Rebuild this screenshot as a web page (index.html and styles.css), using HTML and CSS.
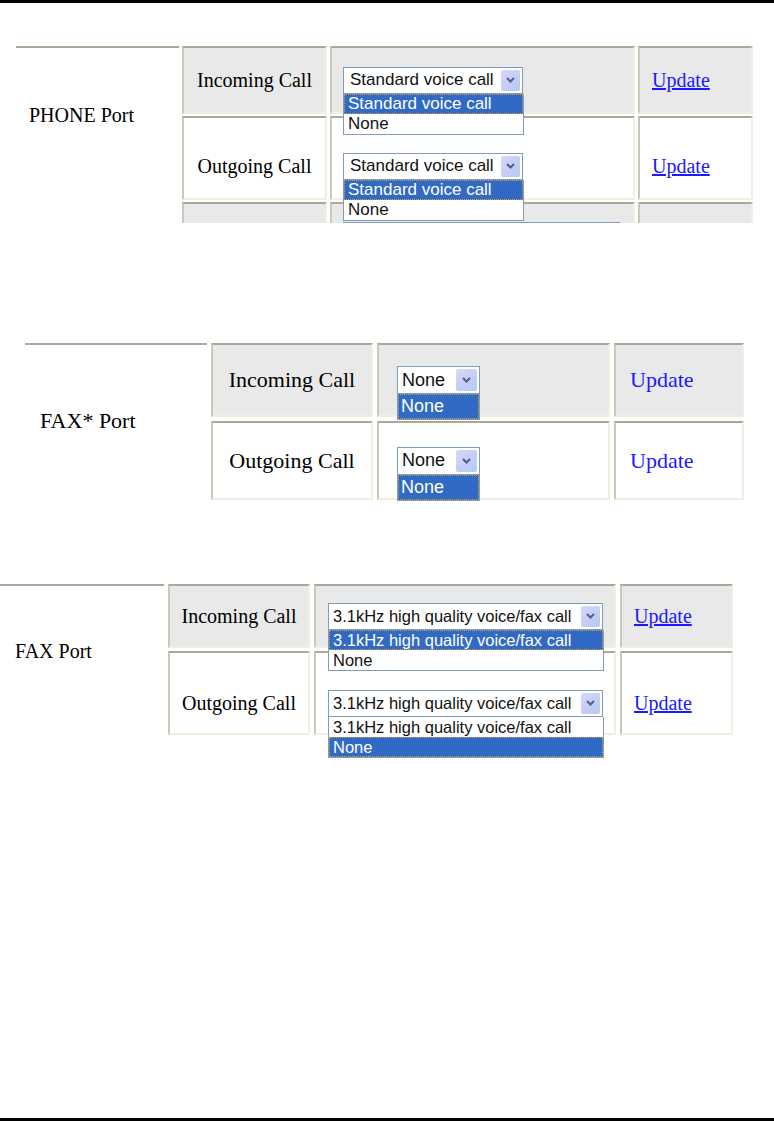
FILE: index.html
```html
<!DOCTYPE html>
<html>
<head>
<meta charset="utf-8">
<link rel="stylesheet" href="styles.css">
</head>
<body>
<div class="page">
  <div class="rule"></div>

  <!-- Block 1: PHONE Port -->
  <div class="shot shot-phone">
    <div class="cell port span2"><span>PHONE Port</span></div>
    <div class="cell gray label">Incoming Call</div>
    <div class="cell gray sel">
      <div class="select">
        <div class="box"><span class="val">Standard voice call</span><span class="btn"><svg width="11" height="8" viewBox="0 0 11 8"><path d="M2 2 L5.5 5.5 L9 2" fill="none" stroke="#4d6185" stroke-width="2"/></svg></span></div>
        <div class="list">
          <div class="opt on">Standard voice call</div>
          <div class="opt">None</div>
        </div>
      </div>
    </div>
    <div class="cell gray link"><a href="#">Update</a></div>

    <div class="cell label low">Outgoing Call</div>
    <div class="cell sel low">
      <div class="select">
        <div class="box"><span class="val">Standard voice call</span><span class="btn"><svg width="11" height="8" viewBox="0 0 11 8"><path d="M2 2 L5.5 5.5 L9 2" fill="none" stroke="#4d6185" stroke-width="2"/></svg></span></div>
        <div class="list">
          <div class="opt on">Standard voice call</div>
          <div class="opt">None</div>
        </div>
      </div>
    </div>
    <div class="cell link low"><a href="#">Update</a></div>

    <div class="cell gray stub"></div>
    <div class="cell gray stub"><div class="edge"></div></div>
    <div class="cell gray stub"></div>
  </div>

  <!-- Block 2: FAX* Port -->
  <div class="shot shot-faxstar">
    <div class="cell port span2"><span>FAX* Port</span></div>
    <div class="cell gray label">Incoming Call</div>
    <div class="cell gray sel">
      <div class="select">
        <div class="box"><span class="val">None</span><span class="btn"><svg width="11" height="8" viewBox="0 0 11 8"><path d="M2 2 L5.5 5.5 L9 2" fill="none" stroke="#4d6185" stroke-width="2"/></svg></span></div>
        <div class="list">
          <div class="opt on">None</div>
        </div>
      </div>
    </div>
    <div class="cell gray link"><a href="#">Update</a></div>

    <div class="cell label">Outgoing Call</div>
    <div class="cell sel">
      <div class="select">
        <div class="box"><span class="val">None</span><span class="btn"><svg width="11" height="8" viewBox="0 0 11 8"><path d="M2 2 L5.5 5.5 L9 2" fill="none" stroke="#4d6185" stroke-width="2"/></svg></span></div>
        <div class="list">
          <div class="opt on">None</div>
        </div>
      </div>
    </div>
    <div class="cell link"><a href="#">Update</a></div>
  </div>

  <!-- Block 3: FAX Port -->
  <div class="shot shot-fax">
    <div class="cell port span2"><span>FAX Port</span></div>
    <div class="cell gray label">Incoming Call</div>
    <div class="cell gray sel">
      <div class="select">
        <div class="box"><span class="val">3.1kHz high quality voice/fax call</span><span class="btn"><svg width="11" height="8" viewBox="0 0 11 8"><path d="M2 2 L5.5 5.5 L9 2" fill="none" stroke="#4d6185" stroke-width="2"/></svg></span></div>
        <div class="list">
          <div class="opt on">3.1kHz high quality voice/fax call</div>
          <div class="opt">None</div>
        </div>
      </div>
    </div>
    <div class="cell gray link"><a href="#">Update</a></div>

    <div class="cell label low">Outgoing Call</div>
    <div class="cell sel low">
      <div class="select">
        <div class="box"><span class="val">3.1kHz high quality voice/fax call</span><span class="btn"><svg width="11" height="8" viewBox="0 0 11 8"><path d="M2 2 L5.5 5.5 L9 2" fill="none" stroke="#4d6185" stroke-width="2"/></svg></span></div>
        <div class="list">
          <div class="opt">3.1kHz high quality voice/fax call</div>
          <div class="opt on">None</div>
        </div>
      </div>
    </div>
    <div class="cell link low"><a href="#">Update</a></div>
  </div>

  <div class="rule rule-bottom"></div>
</div>
</body>
</html>
```

FILE: styles.css
```css
html, body {
  margin: 0;
  padding: 0;
  background: #fff;
}

.page {
  width: 774px;
  height: 1121px;
  display: flex;
  flex-direction: column;
  font-family: "Liberation Serif", "Times New Roman", serif;
  color: #000;
}

.rule {
  height: 3px;
  background: #000;
  flex: none;
}

.rule-bottom {
  margin-top: auto;
}

.shot {
  display: grid;
  flex: none;
}

.cell {
  box-sizing: border-box;
  border-top: 2px solid #aca899;
  border-left: 2px solid #cbc8b8;
  border-right: 2px solid #f1efe2;
  border-bottom: 2px solid #f1efe2;
  background: #fff;
  display: flex;
  align-items: center;
  min-width: 0;
}

.cell.gray {
  background: #e9e9e9;
}

.cell.port {
  border-left: 0;
  border-right: 0;
  border-bottom: 0;
}

.span2 {
  grid-row: span 2;
}

.label {
  justify-content: center;
  white-space: nowrap;
}

.link a {
  color: #1a1aff;
  text-decoration: underline;
}

/* ---------- select widget ---------- */
.select {
  position: relative;
  font-family: "Liberation Sans", Arial, sans-serif;
}

.box {
  box-sizing: border-box;
  border: 1px solid #7f9db9;
  background: #fff;
  display: flex;
  align-items: center;
  padding: 0 2px 0 6px;
}

.val {
  flex: 1;
  white-space: nowrap;
  overflow: hidden;
  color: #111;
}

.btn {
  flex: none;
  width: 19px;
  align-self: stretch;
  margin: 2px 0;
  border-radius: 2px;
  background: linear-gradient(135deg, #dcd8fb 0%, #c6cdf8 50%, #b3cdf3 100%);
  display: flex;
  align-items: center;
  justify-content: center;
}

.list {
  position: absolute;
  left: 0;
  top: 100%;
  z-index: 2;
  box-sizing: border-box;
  border: 1px solid #7f9db9;
  border-top: 0;
  background: #fff;
}

.opt {
  padding-left: 4px;
  white-space: nowrap;
  color: #111;
}

.opt.on {
  background: #316ac5;
  color: #fff;
  outline: 1px dotted #d0a040;
  outline-offset: -1px;
}

/* ---------- block 1: PHONE Port ---------- */
.shot-phone {
  margin: 43px 0 0 16px;
  grid-template-columns: 163px 145px 305px 115px;
  grid-template-rows: 68px 84px 21px;
  column-gap: 3px;
  row-gap: 2px;
  font-size: 20px;
}

.shot-phone .port {
  align-items: center;
  padding: 0 0 18px 13px;
}

.shot-phone .sel {
  padding-left: 11px;
}

.shot-phone .link {
  padding-left: 12px;
}

.shot-phone .low {
  padding-top: 16px;
}

.shot-phone .stub {
  align-items: flex-start;
  border-bottom: 0;
}

.shot-phone .stub:nth-last-child(3) {
  grid-column: 2;
}

.shot-phone .edge {
  margin: 18px 0 0 11px;
  width: 277px;
  height: 1px;
  background: #7f9db9;
}

.shot-phone .select {
  width: 180px;
  font-size: 17px;
}

.shot-phone .box {
  height: 27px;
}

.shot-phone .list {
  width: 181px;
}

.shot-phone .opt {
  height: 20px;
  line-height: 20px;
}

/* ---------- block 2: FAX* Port ---------- */
.shot-faxstar {
  margin: 120px 0 0 25px;
  grid-template-columns: 182px 162px 233px 130px;
  grid-template-rows: 74px 79px;
  column-gap: 4px;
  row-gap: 4px;
  font-size: 22px;
}

.shot-faxstar .port {
  padding: 0 0 4px 15px;
}

.shot-faxstar .sel {
  padding-left: 18px;
}

.shot-faxstar .link {
  padding-left: 14px;
}

.shot-faxstar .link a {
  text-decoration: none;
}

.shot-faxstar .select {
  width: 83px;
  font-size: 18px;
}

.shot-faxstar .box {
  height: 28px;
  padding-left: 4px;
}

.shot-faxstar .btn {
  width: 21px;
}

.shot-faxstar .list {
  width: 83px;
}

.shot-faxstar .opt {
  height: 25px;
  line-height: 25px;
  padding-left: 3px;
}

/* ---------- block 3: FAX Port ---------- */
.shot-fax {
  margin: 84px 0 0 0;
  grid-template-columns: 164px 142px 302px 113px;
  grid-template-rows: 64px 84px;
  column-gap: 4px;
  row-gap: 3px;
  font-size: 20px;
}

.shot-fax .port {
  padding: 0 0 18px 15px;
}

.shot-fax .sel {
  padding-left: 12px;
}

.shot-fax .link {
  padding-left: 12px;
}

.shot-fax .low {
  padding-top: 20px;
}

.shot-fax .select {
  width: 275px;
  font-size: 16.5px;
}

.shot-fax .box {
  height: 27px;
  padding-left: 4px;
}

.shot-fax .list {
  width: 276px;
}

.shot-fax .opt {
  height: 20px;
  line-height: 20px;
}
```
